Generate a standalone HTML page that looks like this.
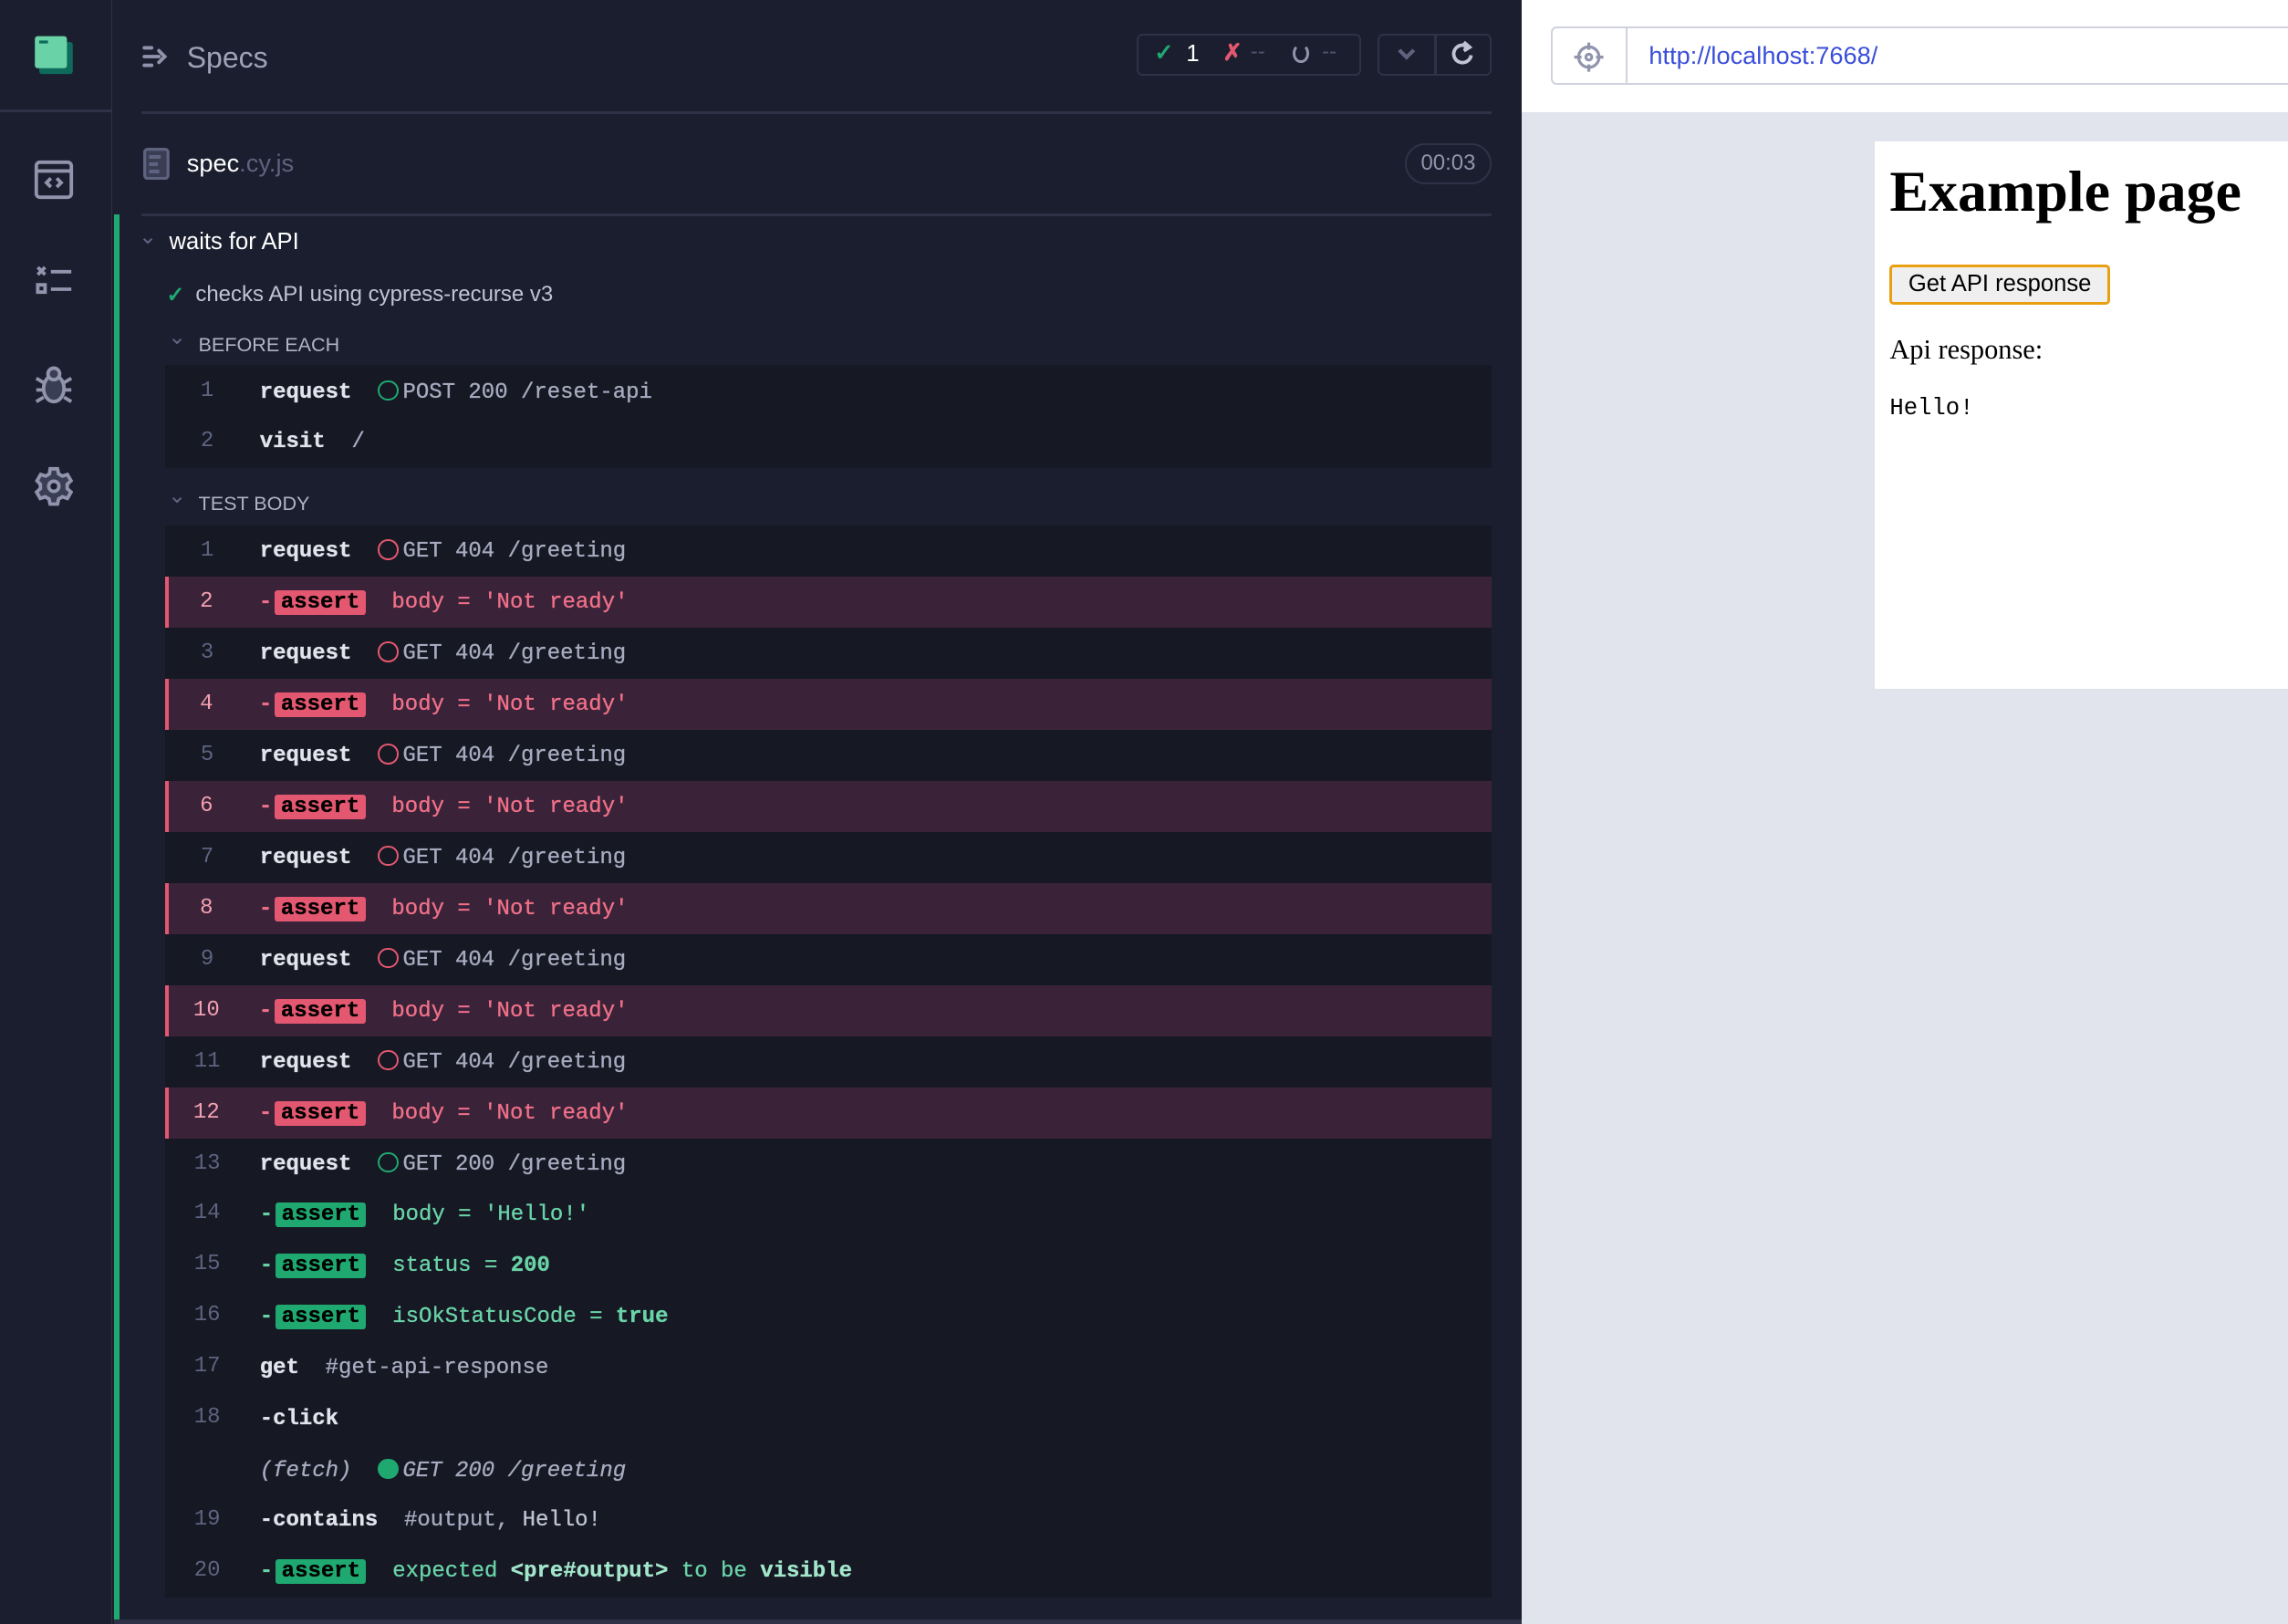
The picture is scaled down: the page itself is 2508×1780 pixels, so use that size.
<!DOCTYPE html>
<html><head><meta charset="utf-8"><style>
*{box-sizing:border-box;margin:0;padding:0}
html,body{width:2508px;height:1780px;overflow:hidden;background:#1b1e2e}
#w{zoom:1.5995;width:1568px;height:1113px;position:relative;font-family:"Liberation Sans",sans-serif}
.a{position:absolute}
.mono{font-family:"Liberation Mono",monospace;font-size:15px}
.row{position:absolute;left:113px;width:909px;height:35px;line-height:35px}
.row.f{background:#3a2339;border-left:3px solid #e45770}
.num{position:absolute;left:0;width:58px;text-align:center;color:#5e6380;font-family:"Liberation Mono",monospace;font-size:15px;top:0}
.row.f .num{color:#f3a0b0;left:-3px}
.c{position:absolute;left:65px;top:1px;white-space:pre;color:#a8abc0;-webkit-text-stroke:0.2px currentColor}
.w{color:#e1e3ed;font-weight:bold}
.tag{padding:0 4px;border-radius:2px;color:#000;font-weight:bold;margin-left:2px}
.rt{background:#e45770}.gt{background:#1fa971}
.red{color:#f07088}.grn{color:#69d3a7}
.circ{display:inline-block;width:14px;height:14px;border-radius:50%;border:1.5px solid;vertical-align:-2px;margin-right:3px}
</style></head><body><div id="w">
<div class="a" style="left:0;top:0;width:77px;height:1113px;background:#1b1e2e;border-right:1px solid #2e3246"></div>
<div class="a" style="left:0;top:75px;width:77px;height:2px;background:#2e3246"></div>
<svg class="a" style="left:22px;top:24px" width="30" height="30" viewBox="0 0 30 30"><rect x="5" y="5" width="23" height="22" rx="2" fill="#0e6b5c"/><rect x="2" y="1" width="22" height="22" rx="2" fill="#69d3a7"/><rect x="5" y="4" width="6" height="2" fill="#0e6b5c"/></svg>
<svg class="a" style="left:22px;top:108px" width="30" height="30" viewBox="0 0 30 30" fill="none" stroke="#9095ad" stroke-width="2.4"><rect x="3" y="3" width="24" height="24" rx="2.5"/><line x1="3" y1="9" x2="27" y2="9"/><path d="M13 14l-3 3 3 3M17 14l3 3-3 3"/></svg>
<svg class="a" style="left:22px;top:178px" width="30" height="30" viewBox="0 0 30 30" stroke="#9095ad" stroke-width="2.4" fill="none"><path d="M4 5l5 5M9 5l-5 5"/><line x1="13" y1="8" x2="27" y2="8"/><rect x="4" y="17" width="5" height="5"/><line x1="13" y1="20" x2="27" y2="20"/></svg>
<svg class="a" style="left:22px;top:248px" width="30" height="32" viewBox="0 0 30 32" stroke="#9095ad" stroke-width="2.4" fill="#3a3e55"><ellipse cx="15" cy="18" rx="7" ry="9"/><circle cx="15" cy="8" r="4"/><path d="M8 14l-5-3M8 19H3M8 24l-5 3M22 14l5-3M22 19h5M22 24l5 3" fill="none"/></svg>
<svg class="a" style="left:22px;top:318px" width="30" height="30" viewBox="0 0 30 30" stroke="#9095ad" stroke-width="2.4" fill="#3a3e55"><path d="M12.5 3h5l.8 3.5 2.6 1.5 3.4-1.1 2.5 4.300-2.6 2.4v3l2.6 2.4-2.5 4.3-3.4-1.1-2.6 1.5-.8 3.5h-5l-.8-3.5-2.6-1.5-3.4 1.1-2.5-4.3 2.6-2.4v-3L3.5 11.2 6 6.9l3.4 1.1L12 6.5z"/><circle cx="15" cy="15" r="3.5" fill="#1b1e2e"/></svg>
<svg class="a" style="left:97px;top:29px" width="20" height="20" viewBox="0 0 20 20" stroke="#9095ad" stroke-width="2.4" fill="none" stroke-linecap="round"><path d="M2 4h5M2 10h10M2 16h5M12 6l4 4-4 4"/></svg>
<div class="a" style="left:128px;top:28px;font-size:20px;color:#a0a3b8">Specs</div>
<div class="a" style="left:779px;top:23px;width:154px;height:29px;border:1.5px solid #2e3246;border-radius:4px"></div>
<div class="a" style="left:791px;top:27px;font-size:16px;color:#1fa971;font-weight:bold">✓</div>
<div class="a" style="left:813px;top:28px;font-size:16px;color:#fff">1</div>
<div class="a" style="left:838px;top:27px;font-size:16px;color:#e45770;font-weight:bold">✗</div>
<div class="a" style="left:857px;top:27px;font-size:15px;color:#4f5470">--</div>
<div class="a" style="left:886px;top:30px;width:11px;height:13px;border:2.5px solid #9095ad;border-top-color:transparent;border-radius:50%"></div>
<div class="a" style="left:906px;top:27px;font-size:15px;color:#4f5470">--</div>
<div class="a" style="left:944px;top:23px;width:78px;height:29px;border:1.5px solid #2e3246;border-radius:4px"></div>
<div class="a" style="left:983px;top:23px;width:1.5px;height:29px;background:#2e3246"></div>
<svg class="a" style="left:956px;top:31px" width="16" height="12" viewBox="0 0 16 12"><path d="M3 3l5 5 5-5" stroke="#5e6380" stroke-width="2.6" fill="none"/></svg>
<svg class="a" style="left:992px;top:27px" width="20" height="20" viewBox="0 0 20 20" fill="none" stroke="#c0c3d4" stroke-width="2.4"><path d="M14 5.5A6 6 0 1 0 16 11"/><path d="M11 2l4 3.5-4 2.5" fill="#c0c3d4"/></svg>
<div class="a" style="left:97px;top:76px;width:925px;height:2px;background:#2e3246"></div>
<svg class="a" style="left:98px;top:101px" width="18" height="22" viewBox="0 0 18 22"><rect x="1" y="1" width="16" height="20" rx="2" fill="#3a3e55" stroke="#5e6380" stroke-width="2"/><rect x="4" y="5" width="8" height="2.5" fill="#5e6380"/><rect x="4" y="10" width="6" height="2.5" fill="#5e6380"/><rect x="4" y="15" width="7" height="2.5" fill="#5e6380"/></svg>
<div class="a" style="left:128px;top:102px;font-size:17px;color:#fff">spec<span style="color:#5e6380">.cy.js</span></div>
<div class="a" style="left:963px;top:98px;width:59px;height:28px;border:1.5px solid #2e3246;border-radius:14px;color:#9095ad;font-size:15px;text-align:center;line-height:25px">00:03</div>
<div class="a" style="left:97px;top:146px;width:925px;height:2px;background:#2e3246"></div>
<div class="a" style="left:78px;top:147px;width:4px;height:963px;background:#1fa971"></div>
<div class="a" style="left:95px;top:153px;font-size:15px;color:#5e6380">⌄</div>
<div class="a" style="left:116px;top:157px;font-size:16px;color:#fff">waits for API</div>
<div class="a" style="left:114px;top:193px;font-size:15px;color:#1fa971;font-weight:bold">✓</div>
<div class="a" style="left:134px;top:193px;font-size:15px;color:#c0c3d4">checks API using cypress-recurse v3</div>
<div class="a" style="left:115px;top:222px;font-size:15px;color:#5e6380">⌄</div>
<div class="a" style="left:136px;top:228px;font-size:13.5px;color:#b0b3c4">BEFORE EACH</div>
<div class="a" style="left:113px;top:250px;width:909px;height:71px;background:#161823"></div>
<div class="row mono" style="top:251px"><span class="num">1</span><span class="c"><span class="w">request</span>  <span class="circ" style="border-color:#1fa971"></span>POST 200 /reset-api</span></div>
<div class="row mono" style="top:285px"><span class="num">2</span><span class="c"><span class="w">visit</span>  /</span></div>
<div class="a" style="left:115px;top:331px;font-size:15px;color:#5e6380">⌄</div>
<div class="a" style="left:136px;top:337px;font-size:13.5px;color:#b0b3c4">TEST BODY</div>
<div class="a" style="left:113px;top:360px;width:909px;height:735px;background:#161823"></div>
<div class="row mono" style="top:360px"><span class="num">1</span><span class="c"><span class="w">request</span>  <span class="circ" style="border-color:#e45770"></span>GET 404 /greeting</span></div>
<div class="row mono f" style="top:395px"><span class="num">2</span><span class="c red" style="left:62px"><b>-</b><span class="tag rt">assert</span>  body = 'Not ready'</span></div>
<div class="row mono" style="top:430px"><span class="num">3</span><span class="c"><span class="w">request</span>  <span class="circ" style="border-color:#e45770"></span>GET 404 /greeting</span></div>
<div class="row mono f" style="top:465px"><span class="num">4</span><span class="c red" style="left:62px"><b>-</b><span class="tag rt">assert</span>  body = 'Not ready'</span></div>
<div class="row mono" style="top:500px"><span class="num">5</span><span class="c"><span class="w">request</span>  <span class="circ" style="border-color:#e45770"></span>GET 404 /greeting</span></div>
<div class="row mono f" style="top:535px"><span class="num">6</span><span class="c red" style="left:62px"><b>-</b><span class="tag rt">assert</span>  body = 'Not ready'</span></div>
<div class="row mono" style="top:570px"><span class="num">7</span><span class="c"><span class="w">request</span>  <span class="circ" style="border-color:#e45770"></span>GET 404 /greeting</span></div>
<div class="row mono f" style="top:605px"><span class="num">8</span><span class="c red" style="left:62px"><b>-</b><span class="tag rt">assert</span>  body = 'Not ready'</span></div>
<div class="row mono" style="top:640px"><span class="num">9</span><span class="c"><span class="w">request</span>  <span class="circ" style="border-color:#e45770"></span>GET 404 /greeting</span></div>
<div class="row mono f" style="top:675px"><span class="num">10</span><span class="c red" style="left:62px"><b>-</b><span class="tag rt">assert</span>  body = 'Not ready'</span></div>
<div class="row mono" style="top:710px"><span class="num">11</span><span class="c"><span class="w">request</span>  <span class="circ" style="border-color:#e45770"></span>GET 404 /greeting</span></div>
<div class="row mono f" style="top:745px"><span class="num">12</span><span class="c red" style="left:62px"><b>-</b><span class="tag rt">assert</span>  body = 'Not ready'</span></div>
<div class="row mono" style="top:780px"><span class="num">13</span><span class="c"><span class="w">request</span>  <span class="circ" style="border-color:#1fa971"></span>GET 200 /greeting</span></div>
<div class="row mono" style="top:814px"><span class="num">14</span><span class="c grn"><b>-</b><span class="tag gt">assert</span>  body = 'Hello!'</span></div>
<div class="row mono" style="top:849px"><span class="num">15</span><span class="c grn"><b>-</b><span class="tag gt">assert</span>  status = <b>200</b></span></div>
<div class="row mono" style="top:884px"><span class="num">16</span><span class="c grn"><b>-</b><span class="tag gt">assert</span>  isOkStatusCode = <b>true</b></span></div>
<div class="row mono" style="top:919px"><span class="num">17</span><span class="c"><span class="w">get</span>  #get-api-response</span></div>
<div class="row mono" style="top:954px"><span class="num">18</span><span class="c"><span class="w">-click</span></span></div>
<div class="row mono" style="top:990px"><span class="c" style="font-style:italic">(fetch)  <span class="circ" style="border-color:#1fa971;background:#1fa971"></span>GET 200 /greeting</span></div>
<div class="row mono" style="top:1024px"><span class="num">19</span><span class="c"><span class="w">-contains</span>  #output, <span style="color:#c0c3d4">Hello!</span></span></div>
<div class="row mono" style="top:1059px"><span class="num">20</span><span class="c grn"><b>-</b><span class="tag gt">assert</span>  expected <b style="color:#a3e7cb">&lt;pre#output&gt;</b> to be <b style="color:#a3e7cb">visible</b></span></div>
<div class="a" style="left:78px;top:1110px;width:965px;height:3px;background:#2e3246"></div>
<div class="a" style="left:1043px;top:0;width:525px;height:1113px;background:#e1e3ed"></div>
<div class="a" style="left:1043px;top:0;width:525px;height:77px;background:#fff"></div>
<div class="a" style="left:1063px;top:18px;width:510px;height:40px;border:1.5px solid #d0d2e0;border-radius:4px"></div>
<div class="a" style="left:1114px;top:18px;width:1.5px;height:40px;background:#d0d2e0"></div>
<svg class="a" style="left:1078px;top:28px" width="22" height="22" viewBox="0 0 22 22" fill="none" stroke="#9095ad" stroke-width="2"><circle cx="11" cy="11" r="7"/><circle cx="11" cy="11" r="2"/><path d="M11 1v5M11 16v5M1 11h5M16 11h5"/></svg>
<div class="a" style="left:1130px;top:28px;font-size:17px;color:#3a4ed8">http://localhost:7668/</div>
<div class="a" style="left:1285px;top:97px;width:283px;height:375px;background:#fff"></div>
<div class="a" style="left:1295px;top:108px;font-family:'Liberation Serif',serif;font-size:40px;font-weight:bold;color:#000;white-space:nowrap">Example page</div>
<div class="a" style="left:1295px;top:181px;width:151px;height:28px;border:2.5px solid #e8a010;border-radius:3px;background:#efefef;font-size:16px;color:#000;text-align:center;line-height:23px">Get API response</div>
<div class="a" style="left:1295px;top:229px;font-family:'Liberation Serif',serif;font-size:19px;color:#000">Api response:</div>
<div class="a" style="left:1295px;top:271px;font-family:'Liberation Mono',monospace;font-size:16px;color:#000">Hello!</div>
</div></body></html>
